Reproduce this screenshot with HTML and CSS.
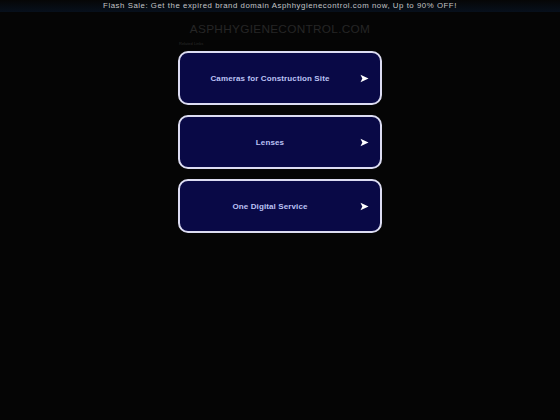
FILE: index.html
```html
<!DOCTYPE html>
<html>
<head>
<meta charset="utf-8">
<link rel="stylesheet" href="styles.css">
</head>
<body>
<div class="topbar">Flash Sale: Get the expired brand domain Asphhygienecontrol.com now, Up to 90% OFF!</div>
<div class="domain">ASPHHYGIENECONTROL.COM</div>
<div class="wrap">
  <div class="rel">Related Links</div>
  <div class="list">
    <a class="card"><span class="label">Cameras for Construction Site</span><svg class="arrow" viewBox="0 0 10 10" width="9" height="9"><path d="M0.5 0.8 L9.5 5 L0.5 9.2 L2.6 5 Z" fill="#fff"/></svg></a>
    <a class="card"><span class="label">Lenses</span><svg class="arrow" viewBox="0 0 10 10" width="9" height="9"><path d="M0.5 0.8 L9.5 5 L0.5 9.2 L2.6 5 Z" fill="#fff"/></svg></a>
    <a class="card"><span class="label">One Digital Service</span><svg class="arrow" viewBox="0 0 10 10" width="9" height="9"><path d="M0.5 0.8 L9.5 5 L0.5 9.2 L2.6 5 Z" fill="#fff"/></svg></a>
  </div>
</div>
</body>
</html>
```
FILE: styles.css
```css
html, body {
  margin: 0;
  padding: 0;
  background: #050505;
  height: 100%;
}
body {
  font-family: "Liberation Sans", Arial, sans-serif;
}
.topbar {
  height: 12px;
  line-height: 11px;
  text-align: center;
  font-size: 7.8px;
  letter-spacing: 0.55px;
  color: #c4c4c4;
  background: linear-gradient(to bottom, #060606 0%, #07101c 100%);
}
.domain {
  margin-top: 10px;
  text-align: center;
  font-size: 11.8px;
  letter-spacing: 0.3px;
  color: #262626;
  height: 14px;
  line-height: 14px;
}
.wrap {
  width: 204px;
  margin: 0 auto;
  padding-top: 5px;
}
.rel {
  font-size: 4px;
  color: #2a2a2a;
  height: 10px;
  line-height: 5px;
  padding-left: 1px;
}
.list {
  display: flex;
  flex-direction: column;
  gap: 10px;
}
.card {
  box-sizing: border-box;
  height: 54px;
  border: 2px solid #dcdcf2;
  border-radius: 10px;
  background: #090946;
  display: flex;
  align-items: center;
  justify-content: center;
  position: relative;
  padding-right: 20px;
}
.label {
  font-size: 8px;
  font-weight: bold;
  letter-spacing: 0.12px;
  color: #bcc2f5;
}
.arrow {
  position: absolute;
  right: 11px;
  top: 50%;
  margin-top: -4px;
}
```
